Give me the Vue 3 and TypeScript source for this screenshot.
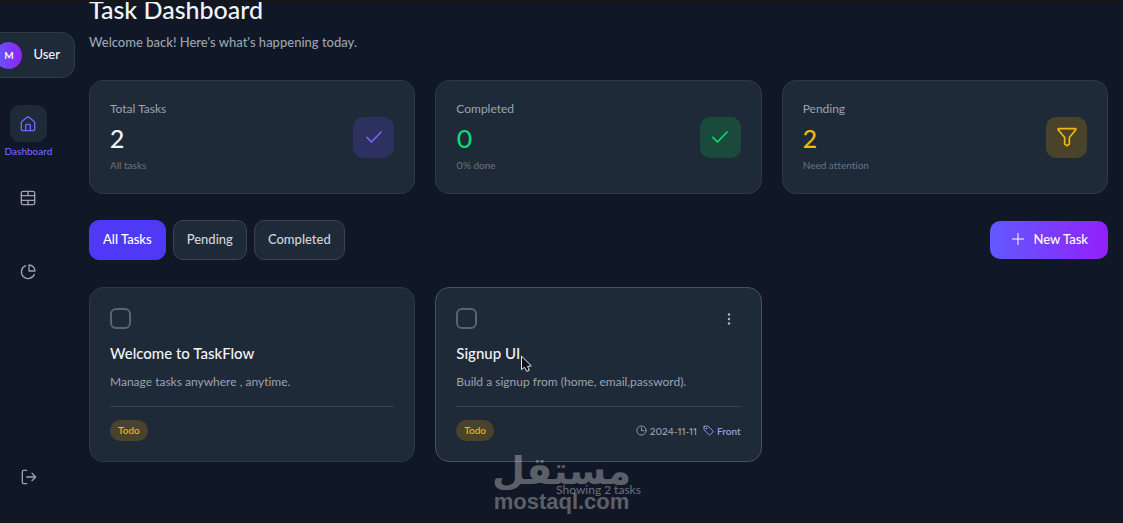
<script setup lang="ts">
import { ref, computed } from 'vue'

interface Task {
  id: number
  title: string
  description: string
  done: boolean
  date?: string
  tag?: string
  active?: boolean
}

type Filter = 'all' | 'pending' | 'completed'

const filters: { key: Filter; label: string }[] = [
  { key: 'all', label: 'All Tasks' },
  { key: 'pending', label: 'Pending' },
  { key: 'completed', label: 'Completed' },
]

const current = ref<Filter>('all')

const tasks = ref<Task[]>([
  { id: 1, title: 'Welcome to TaskFlow', description: 'Manage tasks anywhere , anytime.', done: false },
  {
    id: 2,
    title: 'Signup UI',
    description: 'Build a signup from (home, email,password).',
    done: false,
    date: '2024-11-11',
    tag: 'Front',
    active: true,
  },
])

const completed = computed(() => tasks.value.filter((t) => t.done).length)
const pending = computed(() => tasks.value.length - completed.value)
const percent = computed(() => Math.round((completed.value / tasks.value.length) * 100))

const stats = computed(() => [
  { key: 'total', label: 'Total Tasks', value: tasks.value.length, note: 'All tasks' },
  { key: 'completed', label: 'Completed', value: completed.value, note: `${percent.value}% done` },
  { key: 'pending', label: 'Pending', value: pending.value, note: 'Need attention' },
])

const visible = computed(() =>
  tasks.value.filter((t) => current.value === 'all' || t.done === (current.value === 'completed')),
)
</script>

<template>
  <div class="shell">
    <aside class="sidebar">
      <div class="user">
        <span class="avatar">M</span>
        <span class="user-name">User</span>
      </div>
      <nav class="nav">
        <a href="#dashboard" class="nav-item current">
          <span class="nav-tile">
            <svg class="icon" viewBox="0 0 24 24"><path d="M2 10.200a3 3 0 0 1 1.100-2.300l7-5.700a3 3 0 0 1 3.800 0l7 5.700a3 3 0 0 1 1.100 2.300V20a2 2 0 0 1-2 2H4a2 2 0 0 1-2-2z" /><path d="M8.500 22v-8a1.500 1.500 0 0 1 1.500-1.500h4a1.500 1.500 0 0 1 1.500 1.500v8" /></svg>
          </span>
          <span class="nav-label">Dashboard</span>
        </a>
        <a href="#table" class="nav-item" aria-label="Table">
          <span class="nav-tile">
            <svg class="icon" viewBox="0 0 24 24"><rect x="2" y="2" width="20" height="20" rx="2.500" /><path d="M2 8.500h20M2 15.500h20M12 2v6.500M12 15.500V22" /></svg>
          </span>
        </a>
        <a href="#stats" class="nav-item" aria-label="Statistics">
          <span class="nav-tile">
            <svg class="icon" viewBox="0 0 24 24"><path d="M8.500 2.600A10 10 0 1 0 21.500 15.500" /><path d="M13.500 1.500v9h9a9 9 0 0 0-9-9z" /></svg>
          </span>
        </a>
      </nav>
      <button type="button" class="logout" aria-label="Log out">
        <svg class="icon" viewBox="0 0 24 24"><path d="M8.500 2H4a2 2 0 0 0-2 2v16a2 2 0 0 0 2 2h4.500M8.500 12H22M16.500 6.500L22 12l-5.500 5.500" /></svg>
      </button>
    </aside>

    <main class="main">
      <h1>Task Dashboard</h1>
      <p class="welcome">Welcome back! Here's what's happening today.</p>

      <section class="grid">
        <article v-for="s in stats" :key="s.key" class="card stat" :class="s.key">
          <div>
            <h2>{{ s.label }}</h2>
            <p class="value">{{ s.value }}</p>
            <p class="note">{{ s.note }}</p>
          </div>
          <span class="stat-tile">
            <svg v-if="s.key === 'pending'" viewBox="0 0 24 24"><path d="M2 2h20a.8.8 0 0 1 .6 1.300L14.800 12.500v8l-2.800 2-2.800-2v-8L1.400 3.300A.8.8 0 0 1 2 2z" /></svg>
            <svg v-else viewBox="0 0 24 24"><path d="M3.500 12.500L9 18 20.500 6" /></svg>
          </span>
        </article>
      </section>

      <div class="toolbar">
        <div class="filters">
          <button
            v-for="f in filters"
            :key="f.key"
            type="button"
            class="filter"
            :class="{ selected: current === f.key }"
            @click="current = f.key"
          >{{ f.label }}</button>
        </div>
        <button type="button" class="new-task">
          <svg viewBox="0 0 12 12"><path d="M6 0v12M0 6h12" /></svg>
          New Task
        </button>
      </div>

      <section class="grid">
        <article v-for="t in visible" :key="t.id" class="card task" :class="{ active: t.active }">
          <header>
            <input v-model="t.done" type="checkbox" :aria-label="t.title" />
            <button v-if="t.active" type="button" class="more" aria-label="More">
              <svg viewBox="0 0 4 12"><circle cx="2" cy="1.500" r="1.200" /><circle cx="2" cy="6" r="1.200" /><circle cx="2" cy="10.500" r="1.200" /></svg>
            </button>
          </header>
          <h3>{{ t.title }}</h3>
          <p class="desc">{{ t.description }}</p>
          <footer>
            <span class="badge">Todo</span>
            <div class="meta">
              <span v-if="t.date" class="meta-item">
                <svg viewBox="0 0 12 12"><circle cx="6" cy="6" r="5" /><path d="M6 3v3.200h2.300" /></svg>
                <time>{{ t.date }}</time>
              </span>
              <span v-if="t.tag" class="meta-item tag">
                <svg viewBox="0 0 12 12"><path d="M1.200 2v3.200l5.300 5.300a1 1 0 0 0 1.400 0l2.800-2.800a1 1 0 0 0 0-1.400L5.400 1.200H2a.8.8 0 0 0-.8.8z" /><circle cx="3.700" cy="3.700" r=".5" /></svg>
                {{ t.tag }}
              </span>
            </div>
          </footer>
        </article>
      </section>

      <p class="count">Showing {{ visible.length }} tasks</p>
    </main>

    <div class="watermark">
      <span class="mark-ar" lang="ar" dir="rtl">مستقل</span>
      <span class="mark-en">mostaql.com</span>
    </div>

    <svg class="pointer" viewBox="0 0 12 18"><path d="M1.500 1.500v13.200l3-2.500 2.200 4.200 2.600-1.200-1.700-3.700 3.300-.6z" /></svg>
  </div>
</template>

<style>
body {
  background: #101726;
}
</style>

<style scoped>
* {
  box-sizing: border-box;
  margin: 0;
}
.shell {
  position: relative;
  display: flex;
  min-height: 100vh;
  overflow: hidden;
  border-top: 2px solid #171719;
  border-bottom: 2px solid #171719;
  background: #101726;
  color: #f3f4f6;
  font-family: Lato, "Noto Sans", sans-serif;
  font-size: 13px;
  font-weight: 500;
  font-variant-ligatures: none;
  font-variant-numeric: proportional-nums;
}
button {
  border: 0;
  background: none;
  color: inherit;
  font: inherit;
  cursor: pointer;
}
svg {
  display: block;
  fill: none;
  stroke: currentColor;
  stroke-linecap: round;
  stroke-linejoin: round;
}
.sidebar {
  position: relative;
  display: flex;
  flex: none;
  flex-direction: column;
  align-items: center;
  justify-content: space-between;
  width: 57px;
  padding: 103px 0 32px;
  color: #9ca3af;
}
.user {
  position: absolute;
  top: 30px;
  right: -18px;
  display: flex;
  align-items: center;
  gap: 11px;
  height: 46px;
  padding: 0 14px;
  border: 1px solid #2e3a48;
  border-radius: 13px;
  background: #1f2a39;
  color: #f3f4f6;
}
.user-name {
  padding-bottom: 2px;
}
.avatar {
  display: grid;
  width: 27px;
  height: 27px;
  place-items: center;
  border-radius: 50%;
  background: linear-gradient(90deg, #6159ff, #9320fa);
  font-size: 10px;
  font-weight: 700;
}
.nav {
  display: flex;
  flex-direction: column;
  gap: 20px;
}
.nav-item {
  display: flex;
  height: 54px;
  flex-direction: column;
  align-items: center;
  color: inherit;
  text-decoration: none;
}
.nav-tile {
  display: grid;
  width: 37px;
  height: 37px;
  place-items: center;
  border-radius: 10px;
}
.current {
  color: #7468fa;
}
.current .nav-tile {
  background: #1f2a39;
}
.nav-label {
  margin-top: 2px;
  font-size: 10px;
  line-height: 14px;
}
.icon {
  width: 16px;
  height: 16px;
  stroke-width: 2;
}
.logout {
  padding: 4px;
}
.main {
  flex: 1;
  min-width: 0;
  padding: 0 15px 0 32px;
}
h1 {
  font-size: 25px;
  font-weight: 500;
  line-height: 14px;
}
.welcome {
  margin: 16px 0 28px;
  color: #9ca3af;
  font-size: 13px;
  font-weight: 500;
  line-height: 20px;
}
.grid {
  display: grid;
  grid-template-columns: repeat(3, minmax(0, 1fr));
  gap: 20px;
}
.card {
  padding: 20px;
  border: 1px solid #2d3948;
  border-radius: 14px;
  background: #1f2a39;
}
.stat {
  display: flex;
  align-items: center;
  justify-content: space-between;
}
h2 {
  color: #9ca3af;
  font-size: 12px;
  font-weight: 400;
  line-height: 16px;
}
.value {
  margin: 4px 0 2px;
  font-size: 25px;
  line-height: 34px;
}
.note {
  color: #6b7280;
  font-size: 10px;
  font-weight: 400;
  line-height: 16px;
}
.stat-tile {
  display: grid;
  width: 41px;
  height: 41px;
  place-items: center;
  border-radius: 10px;
  background: #2c315f;
  color: #7468fa;
}
.stat-tile svg {
  width: 20px;
  height: 20px;
  stroke-width: 2;
}
.completed .value,
.completed .stat-tile {
  color: #05df72;
}
.completed .stat-tile {
  background: #194a3c;
}
.pending .value,
.pending .stat-tile {
  color: #f0b90b;
}
.pending .stat-tile {
  background: #4a432c;
}
.toolbar {
  display: flex;
  align-items: center;
  justify-content: space-between;
  margin: 26px 0 27px;
}
.filters {
  display: flex;
  gap: 7px;
}
.filter {
  height: 40px;
  padding: 0 13px 3px;
  border: 1px solid #3a4454;
  border-radius: 10px;
  background: #1f2a39;
  color: #d1d5db;
}
.selected {
  border-color: #4f39f6;
  background: #4f39f6;
  color: #fff;
}
.new-task {
  display: flex;
  align-items: center;
  gap: 9px;
  height: 38px;
  padding: 0 20px 2px 22px;
  border-radius: 10px;
  background: linear-gradient(90deg, #6159ff, #9320fa);
  color: #fff;
}
.new-task svg {
  width: 12px;
  height: 12px;
}
.active {
  border-color: #465162;
}
.task header {
  display: flex;
  align-items: flex-start;
  justify-content: space-between;
  height: 22px;
}
.task input {
  width: 21px;
  height: 21px;
  appearance: none;
  border: 2px solid #596373;
  border-radius: 6px;
}
.more {
  display: grid;
  width: 24px;
  height: 22px;
  place-items: center;
  padding: 0;
}
.more svg {
  width: 4px;
  height: 12px;
  fill: #b4bac4;
  stroke: none;
}
h3 {
  margin-top: 13px;
  font-size: 15px;
  font-weight: 500;
  line-height: 20px;
}
.desc {
  margin: 11px 0 16px;
  color: #9ca3af;
  font-size: 12px;
  font-weight: 400;
  line-height: 16px;
}
.task footer {
  display: flex;
  align-items: center;
  justify-content: space-between;
  padding-top: 13px;
  border-top: 1px solid #364153;
}
.badge {
  padding: 0 8px;
  border-radius: 11px;
  background: #4a432c;
  color: #f0b90b;
  font-size: 10px;
  line-height: 21px;
}
.meta {
  display: flex;
  gap: 6px;
  color: #9ca3af;
  font-size: 10px;
  line-height: 20px;
}
.meta-item {
  display: flex;
  align-items: center;
  gap: 3px;
}
.meta-item svg {
  width: 11px;
  height: 11px;
}
.tag {
  color: #a5a2ed;
}
.count {
  margin-top: 20px;
  color: #6b7280;
  font-size: 12px;
  font-weight: 400;
  line-height: 16px;
  text-align: center;
}
.watermark {
  position: absolute;
  bottom: 6px;
  left: 50%;
  display: flex;
  flex-direction: column;
  align-items: center;
  color: #c4c4c8;
  opacity: 0.42;
  pointer-events: none;
  transform: translateX(-50%);
}
.mark-ar {
  font-family: "DejaVu Sans", sans-serif;
  font-size: 38px;
  font-weight: 700;
  line-height: 36px;
}
.mark-en {
  font-family: "Liberation Sans", Arial, sans-serif;
  font-size: 22px;
  font-weight: 700;
  line-height: 26px;
}
.pointer {
  position: absolute;
  top: 353px;
  left: 520px;
  width: 12px;
  height: 18px;
  fill: #10131a;
  stroke: #e5e7eb;
}
</style>
